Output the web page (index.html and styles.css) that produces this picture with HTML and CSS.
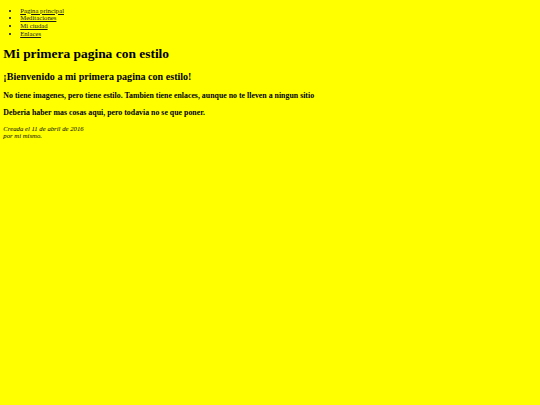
FILE: index.html
```html
<!DOCTYPE html>
<html lang="es">
<head>
<meta charset="utf-8">
<title>Mi primera pagina con estilo</title>
<link rel="stylesheet" href="styles.css">
</head>
<body>
<ul class="navbar">
  <li><a href="#">Pagina principal</a></li>
  <li><a href="#">Meditaciones</a></li>
  <li><a href="#">Mi ciudad</a></li>
  <li><a href="#">Enlaces</a></li>
</ul>
<h1 class="title">Mi primera pagina con estilo</h1>
<h2 class="welcome">¡Bienvenido a mi primera pagina con estilo!</h2>
<h3 class="text">No tiene imagenes, pero tiene estilo. Tambien tiene enlaces, aunque no te lleven a ningun sitio</h3>
<h3 class="text">Deberia haber mas cosas aqui, pero todavia no se que poner.</h3>
<address class="signature">Creada el 11 de abril de 2016<br>por mi mismo.</address>
</body>
</html>
```
FILE: styles.css
```css
html {
  background: #ffff00;
}
body {
  margin: 0;
  padding: 3.36px;
  font-family: "Liberation Serif", "Times New Roman", serif;
  font-size: 6.72px;
  line-height: 1.15;
  color: #000;
  background: #ffff00;
}
.navbar {
  margin: 3.36px 0 6.72px;
  padding-left: 16.8px;
  list-style: disc;
}
.navbar a {
  color: #1a1a1a;
  text-decoration: underline;
}
.title {
  font-size: 13.44px;
  margin: 8px 0 10px;
}
.welcome {
  font-size: 10.08px;
  margin: 8.37px 0;
}
.text {
  font-size: 7.86px;
  margin: 7.86px 0;
}
.signature {
  font-style: italic;
  margin-top: 7.86px;
}
```
